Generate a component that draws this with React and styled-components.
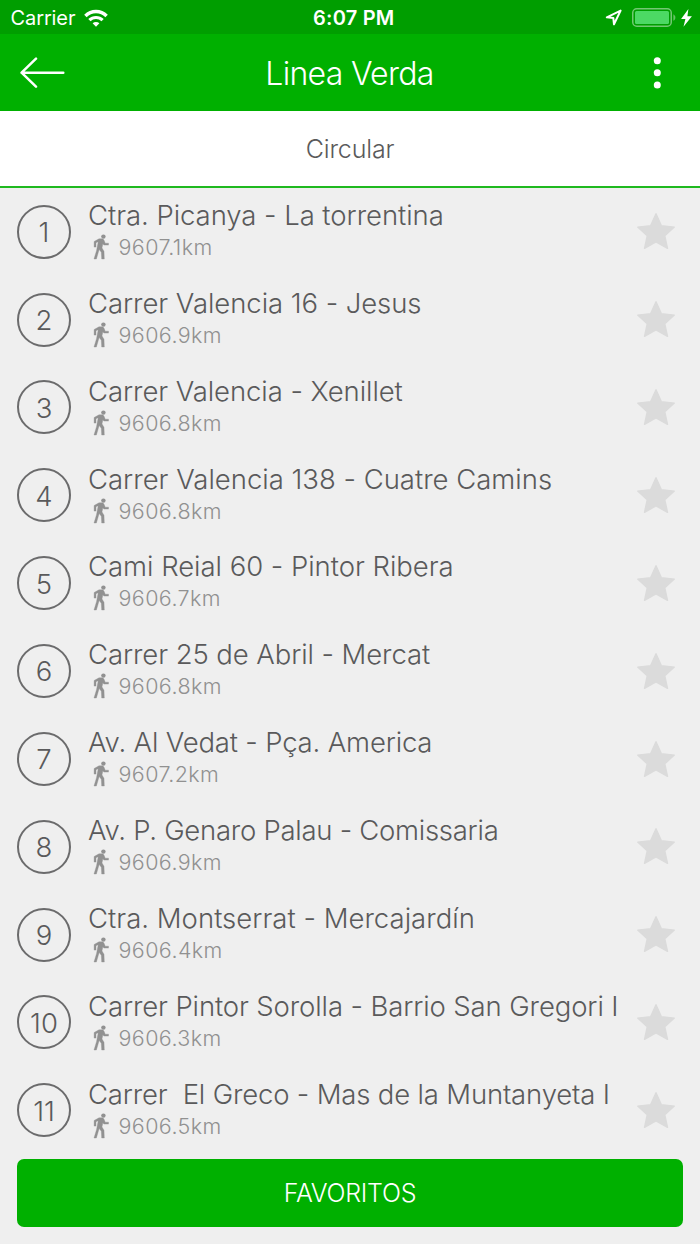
import React from 'react'
import styled, { createGlobalStyle } from 'styled-components'
//////// Style Variables ////////
const green = '#00b000'
const darkGreen = '#009e00'
const textColor = '#5a5a5b'
const mutedColor = '#919191'
const background = '#efefef'
const rowHeight = '87.87px'
//////// Data ////////
const stops = [
    { name: 'Ctra. Picanya - La torrentina', distance: '9607.1km', tracking: -0.05 },
    { name: 'Carrer Valencia 16 - Jesus', distance: '9606.9km', tracking: -0.06 },
    { name: 'Carrer Valencia - Xenillet', distance: '9606.8km', tracking: -0.08 },
    { name: 'Carrer Valencia 138 - Cuatre Camins', distance: '9606.8km', tracking: -0.01 },
    { name: 'Cami Reial 60 - Pintor Ribera', distance: '9606.7km', tracking: -0.03 },
    { name: 'Carrer 25 de Abril - Mercat', distance: '9606.8km', tracking: -0.09 },
    { name: 'Av. Al Vedat - Pça. America', distance: '9607.2km', tracking: -0.17 },
    { name: 'Av. P. Genaro Palau - Comissaria', distance: '9606.9km', tracking: -0.27 },
    { name: 'Ctra. Montserrat - Mercajardín', distance: '9606.4km', tracking: 0.02 },
    { name: 'Carrer Pintor Sorolla - Barrio San Gregori I', distance: '9606.3km', tracking: -0.12 },
    { name: 'Carrer  El Greco - Mas de la Muntanyeta I', distance: '9606.5km', tracking: -0.17 },
]
//////// Styled Components ////////
const GlobalStyle = createGlobalStyle`
    * {
        box-sizing: border-box;
    }
    body {
        margin: 0;
        background: ${background};
        font-family: Inter, 'Liberation Sans', sans-serif;
        font-weight: 300;
        color: ${textColor};
    }
    svg {
        display: block;
        flex: none;
    }
`
const Screen = styled.div`
    display: flex;
    flex-direction: column;
    width: 700px;
    height: 1244px;
    overflow: hidden;
`
const StatusBar = styled.div`
    display: grid;
    grid-template-columns: 1fr auto 1fr;
    align-items: center;
    height: 34px;
    padding: 1px 8px 0 10.5px;
    background: ${darkGreen};
    color: white;
    font-size: 20px;
    font-weight: 400;
`
const StatusGroup = styled.div`
    display: flex;
    align-items: center;
    justify-content: ${props => props.$end ? 'flex-end' : 'flex-start'};
    gap: ${props => props.$gap};
`
const Carrier = styled.span`
    letter-spacing: -0.1px;
`
const Clock = styled.div`
    font-weight: 600;
    letter-spacing: 0.2px;
    padding-left: 5px;
`
const Battery = styled.div`
    display: flex;
    margin: 0 0 0 5px;
`
const Header = styled.header`
    display: grid;
    grid-template-columns: 50px 1fr 50px;
    align-items: center;
    height: 77px;
    padding: 0 18px;
    background: ${green};
    color: white;
`
const Title = styled.h1`
    margin: 0;
    padding: 2px 1px 0 0;
    font-size: 32px;
    font-weight: 300;
    line-height: 40px;
    letter-spacing: -0.7px;
    text-align: center;
`
const IconButton = styled.button`
    display: flex;
    justify-content: ${props => props.$end ? 'flex-end' : 'flex-start'};
    padding: 0 ${props => props.$end ? '21px' : 0} 0 0;
    border: 0;
    background: none;
    color: white;
`
const Tab = styled.div`
    display: flex;
    align-items: center;
    justify-content: center;
    height: 77px;
    border-bottom: 2px solid #1fb91f;
    background: white;
    font-size: 25px;
    letter-spacing: -0.15px;
`
const List = styled.ul`
    margin: 0;
    padding: 0;
    list-style: none;
`
const Row = styled.li`
    display: flex;
    align-items: center;
    height: ${rowHeight};
    padding: 0 24px 0 17px;
`
const Number = styled.div`
    display: flex;
    align-items: center;
    justify-content: center;
    flex: none;
    width: 54px;
    height: 54px;
    margin-bottom: 0.5px;
    padding-top: 1px;
    border: 2px solid #6b6b6c;
    border-radius: 50%;
    font-size: 27.5px;
`
const Info = styled.div`
    flex: 1;
    height: 100%;
    padding: 11px 0 0 17px;
`
const Name = styled.div`
    font-size: 27.5px;
    line-height: 32px;
    letter-spacing: ${props => props.$tracking}px;
    white-space: pre;
`
const Distance = styled.div`
    display: flex;
    align-items: center;
    gap: 9.5px;
    margin-top: 3px;
    padding-left: 5px;
    color: ${mutedColor};
    font-size: 21.5px;
    line-height: 26px;
    letter-spacing: 0.4px;
`
const Favorite = styled.div`
    margin-bottom: 1px;
`
const FavoritesButton = styled.button`
    height: 68px;
    margin: 5px 17px 0;
    padding-top: 1px;
    border: 0;
    border-radius: 7px;
    background: ${green};
    color: white;
    font: inherit;
    font-size: 25px;
    letter-spacing: -0.25px;
`
//////// Icons ////////
const WifiIcon = () => (
    <svg width='24' height='18' viewBox='0 0 24 18' fill='none' stroke='white' strokeWidth='3.5'>
        <path d='M1.4 6.9a15.2 15.2 0 0 1 21.2 0' />
        <path d='M5.4 11.2a9.4 9.4 0 0 1 13.2 0' strokeWidth='3.2' />
        <path d='M12 17.8l-3.4-3.5a4.9 4.9 0 0 1 6.8 0z' fill='white' stroke='none' />
    </svg>
)
const LocationIcon = () => (
    <svg width='17' height='17' viewBox='0 0 17 17' fill='none' stroke='white' strokeWidth='2' strokeLinejoin='round'>
        <path d='M15.6 1.6L1.8 8.3l6.5.6.7 6.4z' />
    </svg>
)
const BatteryIcon = () => (
    <svg width='44' height='20' viewBox='0 0 44 20'>
        <rect x='.75' y='.75' width='38.5' height='17.5' rx='4' fill='none' stroke='#73c873' strokeWidth='1.5' />
        <rect x='3' y='3' width='34' height='13' rx='1.5' fill='#4cd964' />
        <path d='M41.4 6.2c2.6 1.4 2.6 5.2 0 6.6z' fill='#66c266' />
    </svg>
)
const BoltIcon = () => (
    <svg width='11' height='18' viewBox='0 0 11 18' fill='white'>
        <path d='M7.4 0L.1 9.9h4.3L2.5 17.8 10.9 7.2H6.4z' />
    </svg>
)
const BackIcon = () => (
    <svg width='48' height='32' viewBox='0 0 48 32' fill='none' stroke='white' strokeWidth='2.5' strokeLinecap='round' strokeLinejoin='round'>
        <path d='M18 1.7L3.6 15.7 18 29.7M3.6 15.7h41.7' />
    </svg>
)
const MenuIcon = () => (
    <svg width='8' height='32' viewBox='0 0 8 32' fill='white'>
        <circle cx='4.3' cy='3.7' r='3.5' />
        <circle cx='4.3' cy='15.8' r='3.5' />
        <circle cx='4.3' cy='27.9' r='3.5' />
    </svg>
)
const WalkIcon = () => (
    <svg width='16' height='26' viewBox='0 0 16 26' fill={mutedColor}>
        <circle cx='10.4' cy='2.6' r='2.2' />
        <path
            d='M6 4.8h3.2c1 .2 1.6.8 2 1.8l1 2.6h3.3v1.9h-4.7l-.9-1.4-.9 4.3 2 3.2.3 7.8H8.7l-.4-6.7-2.1-2.7-1 3.2L3.4 25H1l2.5-8.3 1.7-9-2.2 1.1v4.3H1.1V7.5z'
            stroke={mutedColor}
            strokeWidth='0.35'
        />
    </svg>
)
const StarIcon = () => (
    <svg width='40' height='38' viewBox='0 0 40 38' fill='#dbdbdb' stroke='#dbdbdb' strokeWidth='1.4' strokeLinejoin='round'>
        <path d='M20 1.7l5.4 12.1 12.9 1.3-9.5 8.7 2.7 12.5L20 29.9 8.5 36.3l2.7-12.5-9.5-8.7 12.9-1.3z' />
    </svg>
)
export default function App() {
    return (
        <>
            <GlobalStyle />
            <Screen>
                <StatusBar>
                    <StatusGroup $gap='9px'>
                        <Carrier>Carrier</Carrier>
                        <WifiIcon />
                    </StatusGroup>
                    <Clock>6:07 PM</Clock>
                    <StatusGroup $end $gap='5px'>
                        <LocationIcon />
                        <Battery>
                            <BatteryIcon />
                        </Battery>
                        <BoltIcon />
                    </StatusGroup>
                </StatusBar>
                <Header>
                    <IconButton aria-label='Back'>
                        <BackIcon />
                    </IconButton>
                    <Title>Linea Verda</Title>
                    <IconButton $end aria-label='Menu'>
                        <MenuIcon />
                    </IconButton>
                </Header>
                <Tab>Circular</Tab>
                <List>
                    {stops.map((stop, index) => (
                        <Row key={stop.name}>
                            <Number>{index + 1}</Number>
                            <Info>
                                <Name $tracking={stop.tracking}>{stop.name}</Name>
                                <Distance>
                                    <WalkIcon />
                                    {stop.distance}
                                </Distance>
                            </Info>
                            <Favorite>
                                <StarIcon />
                            </Favorite>
                        </Row>
                    ))}
                </List>
                <FavoritesButton>FAVORITOS</FavoritesButton>
            </Screen>
        </>
    )
}
